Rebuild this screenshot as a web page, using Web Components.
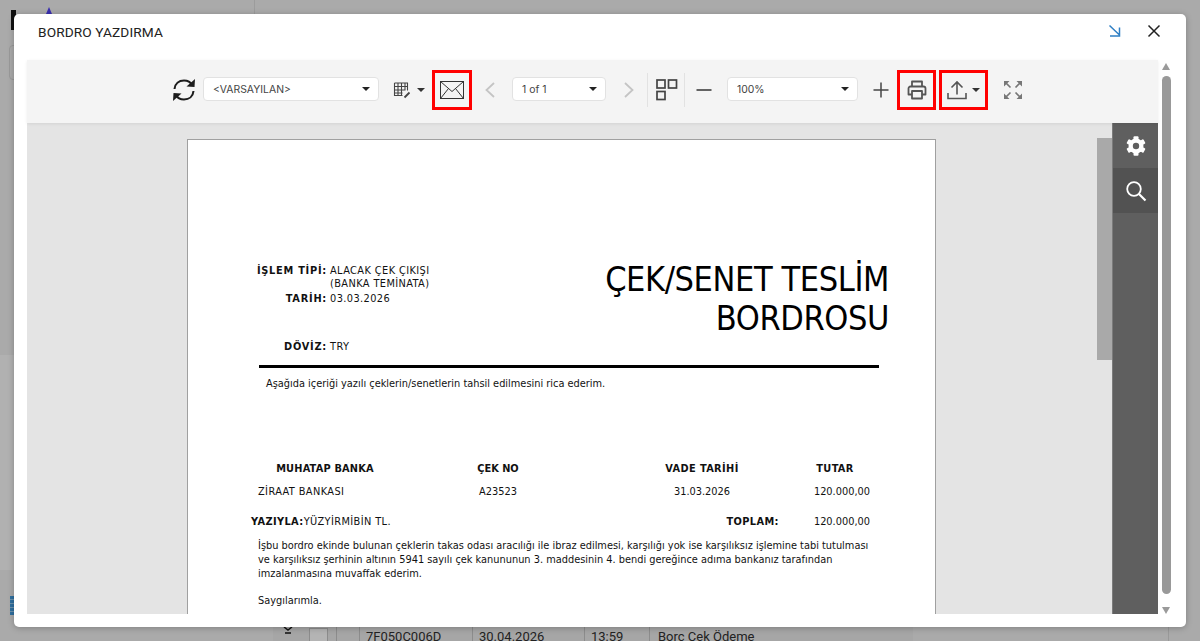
<!DOCTYPE html>
<html lang="tr"><head><meta charset="utf-8"><title>Bordro</title>
<style>
html,body{margin:0;height:100%;overflow:hidden}
body{font-family:"Roboto","Liberation Sans",sans-serif;background:#aaa}
</style></head><body>
<app-backdrop></app-backdrop>
<print-modal heading="BORDRO YAZDIRMA">
  <report-viewer>
    <bordro-page></bordro-page>
  </report-viewer>
</print-modal>
<script>
function def(name,html,setup){
  customElements.define(name,class extends HTMLElement{
    constructor(){super();this.attachShadow({mode:'open'}).innerHTML=typeof html==='function'?html(this):html;}
    connectedCallback(){
      if(typeof html==='function')this.shadowRoot.innerHTML=html(this);
      if(setup)setup(this);
    }
  });
}
const I={
 sync:'<svg width="24" height="26" viewBox="0 0 24 26" fill="none" stroke="#1c1c1c" stroke-width="2.100"><path d="M2.500 12C3 6.500 7 3.500 12 3.500c3.500 0 6.500 1.500 8 4.500"/><path d="M14.500 9.500l8 .5.500-8z" fill="#1c1c1c" stroke="none"/><path d="M21.500 14c-.5 5.500-4.500 8.500-9.500 8.500-3.500 0-6.500-1.500-8-4.500"/><path d="M9.500 16.500l-8-.5-.500 8z" fill="#1c1c1c" stroke="none"/></svg>',
 table:'<svg width="19" height="18" viewBox="0 0 19 18" fill="none" stroke="#444" stroke-width="1.100"><path d="M1.500 2h13v7.500M1.500 2v12.500h8M1.500 5.500h13M1.500 9h11M1.500 12h8M5 2v12M8.500 2v12M12 2v7"/><path d="M11.500 16.500l5-5" stroke-width="1.800"/></svg>',
 mail:'<svg width="24" height="18" viewBox="0 0 24 18" fill="#f4f4f4" stroke="#333" stroke-width="1"><rect x=".5" y=".5" width="23" height="17"/><path d="M.5.500 12 10.500 23.500.5M.5 17.500 8.500 7.500M23.500 17.500 15.500 7.500" fill="none"/></svg>',
 left:'<svg width="12" height="16" viewBox="0 0 12 16" fill="none" stroke="#c4c4c4" stroke-width="1.800"><path d="M10 1 2.500 8l7.500 7"/></svg>',
 right:'<svg width="12" height="16" viewBox="0 0 12 16" fill="none" stroke="#c4c4c4" stroke-width="1.800"><path d="M2 1l7.500 7L2 15"/></svg>',
 thumbs:'<svg width="22" height="22" viewBox="0 0 22 22" fill="none" stroke="#444" stroke-width="1.700"><rect x="1" y="1" width="8" height="8"/><rect x="12.500" y="1" width="8" height="8"/><rect x="1" y="12.500" width="8" height="8"/></svg>',
 minus:'<svg width="16" height="4" viewBox="0 0 16 4" stroke="#333" stroke-width="1.600"><path d="M.5 2h15"/></svg>',
 plus:'<svg width="16" height="16" viewBox="0 0 16 16" stroke="#444" stroke-width="1.500"><path d="M.5 8h15M8 .5v15"/></svg>',
 print:'<svg width="20" height="20" viewBox="0 0 20 20" fill="none" stroke="#555" stroke-width="1.800" stroke-linejoin="round"><path d="M5 6V1.500h10V6"/><path d="M5 14.500H1.500V8.500a2 2 0 0 1 2-2h13a2 2 0 0 1 2 2v6H15"/><rect x="5" y="11" width="10" height="7.500"/></svg>',
 up:'<svg width="20" height="20" viewBox="0 0 20 20" fill="none" stroke="#555" stroke-width="1.600"><path d="M10 14.500V2M4.500 7.500 10 2l5.500 5.500M1 13v5.500h18V13"/></svg>',
 full:'<svg width="20" height="20" viewBox="0 0 20 20" fill="#777" stroke="#777"><path d="M1 1h5.500L1 6.500zM19 1h-5.500L19 6.500zM1 19h5.500L1 13.500zM19 19h-5.500l5.500-5.500z" stroke="none"/><path d="M3 3l4.500 4.500M17 3l-4.500 4.500M3 17l4.500-4.500M17 17l-4.500-4.500" stroke-width="1.700"/></svg>',
 gear:'<svg width="22" height="22" viewBox="0 0 22 22"><g fill="#fff"><circle cx="11" cy="11" r="7.500"/><rect x="8.500" y="1.300" width="5" height="19.400" rx="1"/><rect x="8.500" y="1.300" width="5" height="19.400" rx="1" transform="rotate(60 11 11)"/><rect x="8.500" y="1.300" width="5" height="19.400" rx="1" transform="rotate(120 11 11)"/></g><circle cx="11" cy="11" r="3.200" fill="#5f5f5f"/></svg>',
 search:'<svg width="22" height="22" viewBox="0 0 22 22" fill="none" stroke="#fff" stroke-width="1.800"><circle cx="9" cy="9" r="6.800"/><path d="M14 14l6.500 6.500" stroke-width="2.200"/></svg>',
 shrink:'<svg width="14" height="14" viewBox="0 0 14 14" fill="none" stroke="#2f7fc4" stroke-width="1.500"><path d="M1.500 1.500 11.500 11M11.500 3.500v8.500H2"/></svg>',
 close:'<svg width="14" height="14" viewBox="0 0 14 14" stroke="#222" stroke-width="1.500"><path d="M1.500 1.500l11 11M12.500 1.500l-11 11"/></svg>'
};

def('tool-select',h=>`<style>
:host{display:flex;align-items:center;justify-content:space-between;box-sizing:border-box;height:24px;margin-top:-2px;background:#fff;border:1px solid #e2e2e2;border-radius:4px;padding:0 8px 0 9px;font:10.400px "Inter","Roboto",sans-serif;color:#444}
i{width:0;height:0;border:4px solid transparent;border-top-color:#222;border-bottom:0}
</style><span><slot></slot></span><i></i>`);

def('tool-btn',h=>`<style>
:host{display:flex;align-items:center;justify-content:center;gap:5px;box-sizing:border-box;height:40px;flex:none}
:host([marked]){border:3px solid #f00}
i{width:0;height:0;border:4px solid transparent;border-top-color:#333;border-bottom:0}
svg{display:block}
</style>${I[h.getAttribute('icon')]||''}${h.hasAttribute('menu')?'<i></i>':''}`);

def('tool-sep',`<style>:host{display:block;width:1px;height:34px;background:#e2e2e2;flex:none}</style>`);

def('viewer-toolbar',`<style>
:host{display:flex;align-items:center;height:63px;box-sizing:border-box;background:#f4f4f4;padding:0 0 3px 145px;box-shadow:0 1px 3px rgba(0,0,0,.08);position:relative;z-index:1}
</style>
<tool-btn icon="sync" style="width:24px"></tool-btn>
<tool-select style="width:176px;margin-left:7px">&lt;VARSAYILAN&gt;</tool-select>
<tool-btn icon="table" menu style="width:32px;margin-left:14px"></tool-btn>
<tool-btn icon="mail" marked style="width:40px;margin-left:7px"></tool-btn>
<tool-btn icon="left" style="width:12px;margin-left:12px"></tool-btn>
<tool-select style="width:94px;margin-left:16px">1 of 1</tool-select>
<tool-btn icon="right" style="width:12px;margin-left:17px"></tool-btn>
<tool-sep style="margin-left:12px"></tool-sep>
<tool-btn icon="thumbs" style="width:22px;margin-left:8px"></tool-btn>
<tool-sep style="margin-left:6px"></tool-sep>
<tool-btn icon="minus" style="width:16px;margin-left:11px"></tool-btn>
<tool-select style="width:131px;margin-left:15px">100%</tool-select>
<tool-btn icon="plus" style="width:16px;margin-left:15px"></tool-btn>
<tool-btn icon="print" marked style="width:39px;margin-left:8px"></tool-btn>
<tool-btn icon="up" menu marked style="width:49px;margin-left:3px"></tool-btn>
<tool-btn icon="full" style="width:20px;margin-left:15px"></tool-btn>`);

def('side-panel',`<style>
:host{display:block;width:45px;flex:none;background:#5f5f5f;border-left:1px solid #7c7c7c;box-sizing:content-box}
div{height:45px;display:flex;align-items:center;justify-content:center}
.s{background:#525252}
svg{display:block}
</style><div>${I.gear}</div><div class="s">${I.search}</div>`);

def('v-scroll',h=>`<style>
:host{display:flex;flex-direction:column;align-items:center;flex:none;width:12px;height:100%;box-sizing:border-box;padding-top:3px}
b{width:0;height:0;border:4.500px solid transparent;flex:none}
.u{border-bottom:7px solid #9a9a9a;border-top:0}
.d{border-top:7px solid #9a9a9a;border-bottom:0;margin-top:13px}
i{display:block;width:9px;flex:1;margin-top:6px;background:#999;border-radius:5px}
</style><b class="u"></b><i></i><b class="d"></b>`);

def('report-viewer',`<style>
:host{display:flex;flex:1;min-height:0;padding-left:13px;padding-right:14px;gap:2px}
.v{flex:1;display:flex;flex-direction:column;min-width:0}
.main{flex:1;display:flex;min-height:0;background:#e4e4e4}
.scroll{flex:1;overflow:hidden;padding:16px 0 0 160px;min-width:0}
.bar{width:15px;flex:none;background:#e4e4e4;padding-top:15px;box-sizing:border-box}
.bar i{display:block;height:222px;background:#a9a9a9}
</style>
<div class="v"><viewer-toolbar></viewer-toolbar>
<div class="main"><div class="scroll"><slot></slot></div><div class="bar"><i></i></div><side-panel></side-panel></div></div>
<v-scroll></v-scroll>`);

def('print-modal',h=>`<style>
:host{position:absolute;left:14px;top:14px;width:1172px;height:613px;background:#fff;border-radius:5px;display:flex;flex-direction:column;box-shadow:0 1px 6px rgba(0,0,0,.25);overflow:hidden}
header{height:46px;flex:none;display:flex;align-items:center;padding:0 25px 10px 24px;color:#222;box-sizing:border-box}
h1{font:400 13.700px "Roboto",sans-serif;margin:0;flex:1;letter-spacing:.1px}
.a{display:block;margin-top:1px}.x{display:block;margin-left:25px}
footer{height:13px;flex:none}
</style><header><h1>${h.getAttribute('heading')}</h1><span class="a">${I.shrink}</span><span class="x">${I.close}</span></header><slot></slot><footer></footer>`);

def('bordro-page',`<style>
:host{display:block;box-sizing:border-box;width:749px;height:520px;background:#fff;border:1px solid #a0a0a0;border-bottom:0;color:#111;font:10.900px/14px "DejaVu Sans Condensed","DejaVu Sans",sans-serif;font-stretch:condensed;padding-top:124px;overflow:hidden}
b{font-weight:700;letter-spacing:.4px}
.u{letter-spacing:.4px}
.head{display:flex;justify-content:space-between;padding:0 46px 0 0;height:101px}
.meta{display:grid;grid-template-columns:139px auto;column-gap:3px;grid-auto-rows:min-content;align-content:start;line-height:13px}
.meta b{text-align:right;letter-spacing:.75px}
.meta .t{margin-top:2px}
.meta .gap{margin-top:35px}
.title{font:400 34px/39px "DejaVu Sans Condensed","DejaVu Sans",sans-serif;font-stretch:condensed;text-align:right;margin:-4px 0 0;letter-spacing:-.4px;color:#000}
hr{border:0;height:3px;background:#000;margin:0 56px 0 71px}
.intro{margin:9px 0 0 78px}
.cols{display:grid;grid-template-columns:134px 212px 196px 70px;margin:71px 0 0 70px;row-gap:9px}
.c{text-align:center}
.r{text-align:right}
.foot{display:flex;margin:16px 0 0 63px}
.foot .sum{margin-left:auto;margin-right:35px}
.foot .amt{margin-right:65px}
.para{margin:10px 0 0 70px;white-space:nowrap}
.sig{margin:13px 0 0 70px}
</style>
<div class="head">
 <div class="meta">
  <b>İŞLEM TİPİ:</b><span class="u">ALACAK ÇEK ÇIKIŞI<br>(BANKA TEMİNATA)</span>
  <b class="t">TARİH:</b><span class="t u">03.03.2026</span>
  <b class="gap">DÖVİZ:</b><span class="gap u">TRY</span>
 </div>
 <h2 class="title">ÇEK/SENET TESLİM<br>BORDROSU</h2>
</div>
<hr>
<div class="intro">Aşağıda içeriği yazılı çeklerin/senetlerin tahsil edilmesini rica ederim.</div>
<div class="cols">
 <b class="c" style="letter-spacing:.2px">MUHATAP BANKA</b><b class="c" style="letter-spacing:0">ÇEK NO</b><b class="c">VADE TARİHİ</b><b class="c">TUTAR</b>
 <span class="u" style="white-space:nowrap">ZİRAAT BANKASI</span><span class="c">A23523</span><span class="c">31.03.2026</span><span class="r" style="white-space:nowrap">120.000,00</span>
</div>
<div class="foot"><b>YAZIYLA:</b><span class="u">YÜZYİRMİBİN TL.</span><b class="sum">TOPLAM:</b><span class="amt">120.000,00</span></div>
<div class="para">İşbu bordro ekinde bulunan çeklerin takas odası aracılığı ile ibraz edilmesi, karşılığı yok ise karşılıksız işlemine tabi tutulması<br>ve karşılıksız şerhinin altının 5941 sayılı çek kanununun 3. maddesinin 4. bendi gereğince adıma bankanız tarafından<br>imzalanmasına muvaffak ederim.</div>
<div class="sig">Saygılarımla.</div>`);

def('app-backdrop',`<style>
:host{position:absolute;inset:0;display:block;background:#aaa;overflow:hidden;color:#222;font:13px "Roboto",sans-serif}
.abs{position:absolute}
</style>
<div class="abs" style="left:11px;top:10px;width:5px;height:20px;background:#111"></div>
<div class="abs" style="left:46px;top:7px;width:0;height:0;border:3px solid transparent;border-top:0;border-bottom:7px solid #3a2fb0"></div>
<div class="abs" style="left:9px;top:45px;width:20px;height:33px;border:1px solid #999;border-radius:4px"></div>
<div class="abs" style="left:254px;top:0;width:1px;height:14px;background:#9c9c9c"></div>
<div class="abs" style="left:0;top:355px;width:14px;height:215px;background:#b1b1b1"></div>
<div class="abs" style="left:10px;top:596px;width:5px;height:19px;background:repeating-linear-gradient(#2f6f9f 0 3px,#6e93ad 3px 4px)"></div>
<div class="abs" style="left:273px;top:627px;width:640px;height:14px;background:#a6a6a6"></div>
<svg class="abs" style="left:282px;top:627px" width="12" height="8" viewBox="0 0 12 8" fill="none" stroke="#111" stroke-width="1.500"><path d="M2 0l4 3 4-3M3 6h6"/></svg>
<div class="abs" style="left:309px;top:628px;width:19px;height:13px;background:#b4b4b4;border:1px solid #8c8c8c;border-bottom:0;box-sizing:border-box"></div>
<div class="abs" style="left:336px;top:627px;width:1px;height:14px;background:#8c8c8c"></div>
<div class="abs" style="left:359px;top:627px;width:1px;height:14px;background:#8c8c8c"></div>
<div class="abs" style="left:472px;top:627px;width:1px;height:14px;background:#8c8c8c"></div>
<div class="abs" style="left:584px;top:627px;width:1px;height:14px;background:#8c8c8c"></div>
<div class="abs" style="left:649px;top:627px;width:1px;height:14px;background:#8c8c8c"></div>
<div class="abs" style="left:1168px;top:627px;width:1px;height:14px;background:#999"></div>
<div class="abs" style="left:366px;top:629px">7F050C006D</div>
<div class="abs" style="left:479px;top:629px">30.04.2026</div>
<div class="abs" style="left:591px;top:629px">13:59</div>
<div class="abs" style="left:658px;top:629px">Borç Çek Ödeme</div>`);
</script>
</body></html>
